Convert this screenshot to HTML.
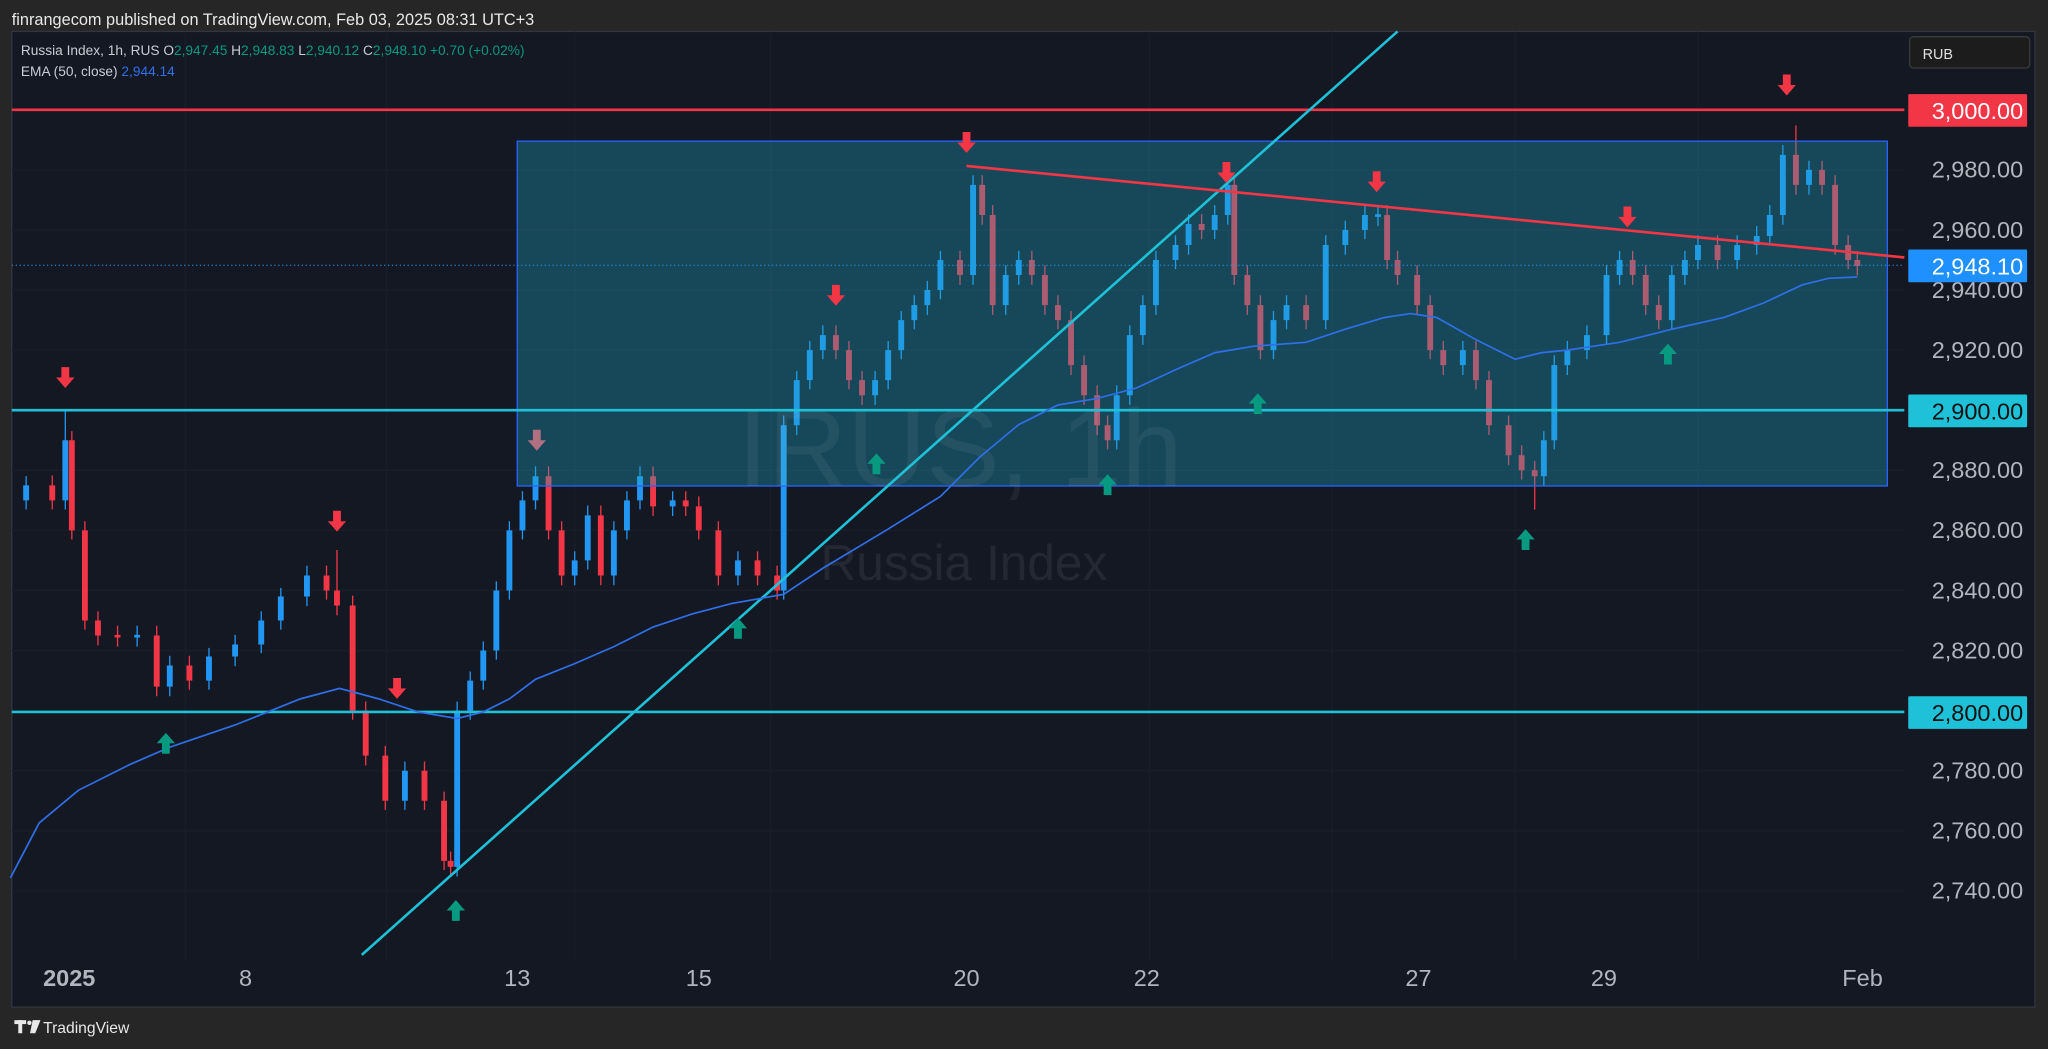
<!DOCTYPE html>
<html><head><meta charset="utf-8"><style>
html,body{margin:0;padding:0;background:#262626;overflow:hidden}
svg{display:block}
text{font-family:"Liberation Sans",sans-serif}
</style></head><body>
<svg width="2048" height="1049" viewBox="0 0 1568 803" xmlns="http://www.w3.org/2000/svg">
<rect width="1568" height="803" fill="#262626"/>
<text x="9" y="19" fill="#e8e8e8" font-size="12.5">finrangecom published on TradingView.com, Feb 03, 2025 08:31 UTC+3</text>
<rect x="9" y="24" width="1549" height="747" fill="#141823" stroke="#33363f" stroke-width="1"/>
<g stroke="#1a1e2a" stroke-width="1">
<line x1="9" x2="1458" y1="130" y2="130"/><line x1="9" x2="1458" y1="176" y2="176"/><line x1="9" x2="1458" y1="222" y2="222"/><line x1="9" x2="1458" y1="268" y2="268"/><line x1="9" x2="1458" y1="360" y2="360"/><line x1="9" x2="1458" y1="406" y2="406"/><line x1="9" x2="1458" y1="452" y2="452"/><line x1="9" x2="1458" y1="498" y2="498"/><line x1="9" x2="1458" y1="590" y2="590"/><line x1="9" x2="1458" y1="636" y2="636"/><line x1="9" x2="1458" y1="682" y2="682"/>
<line x1="142" x2="142" y1="24" y2="735"/><line x1="296" x2="296" y1="24" y2="735"/><line x1="440" x2="440" y1="24" y2="735"/><line x1="590" x2="590" y1="24" y2="735"/><line x1="880" x2="880" y1="24" y2="735"/><line x1="1020" x2="1020" y1="24" y2="735"/><line x1="1160" x2="1160" y1="24" y2="735"/><line x1="1300" x2="1300" y1="24" y2="735"/>
</g>
<path fill="none" stroke="#2196f3" stroke-width="1" d="M20 364.5V390 M50 314V390 M105 479V495 M130 502V533 M160 496V528 M180 486V510 M200 468V500 M215 450V482 M235 433V464 M310 583V620 M350 537V671 M360 514V551 M370 491V528 M380 445V505 M390 399V459 M400 376V413 M410 357V390 M440 422V448 M450 387V436 M470 399V448 M480 376V413 M490 357V390 M515 376V395 M565 422V448 M600 318V459 M610 284V333 M620 261V298 M630 249V275 M670 284V310 M680 261V298 M690 238V275 M700 226V252 M710 215V241 M720 192V229 M745 134V218 M770 203V241 M780 192V218 M855 295V344 M865 249V310 M875 226V264 M885 192V241 M900 180V206 M910 164V195 M930 157V183 M940 134V172 M975 238V275 M985 226V252 M1015 180V252 M1030 169V195 M1045 157V183 M1055 157V173 M1120 261V287 M1182 330V372 M1190 272V344 M1200 261V287 M1215 249V275 M1230 203V264 M1240 192V218 M1280 203V252 M1290 192V218 M1300 180V206 M1330 180V206 M1345 173V195 M1355 157V188 M1365 111V172 M1385 123V149"/>
<path fill="none" stroke="#2196f3" stroke-width="4.5" d="M20 383V371.5 M50 383V337 M105 486V488 M130 525.6V509.5 M160 521V502.6 M180 502.6V493.4 M200 493.4V475 M215 475V456.6 M235 456.6V440.5 M310 613V590 M350 663.6V544 M360 544V521 M370 521V498 M380 498V452 M390 452V406 M400 406V383 M410 383V364.6 M440 440.5V429 M450 429V394.5 M470 440.5V406 M480 406V383 M490 383V364.6 M515 387.6V383 M565 440.5V429 M600 452V325.5 M610 325.5V291 M620 291V268 M630 268V256.5 M670 302.5V291 M680 291V268 M690 268V245 M700 245V233.5 M710 233.5V222 M720 222V199 M745 210.5V141.5 M770 233.5V210.5 M780 210.5V199 M855 337V302.5 M865 302.5V256.5 M875 256.5V233.5 M885 233.5V199 M900 199V187.5 M910 187.5V171.4 M930 176V164.5 M940 164.5V141.5 M975 268V245 M985 245V233.5 M1015 245V187.5 M1030 187.5V176 M1045 176V164.5 M1055 164V166 M1120 279.5V268 M1182 364.6V337 M1190 337V279.5 M1200 279.5V268 M1215 268V256.5 M1230 256.5V210.5 M1240 210.5V199 M1280 245V210.5 M1290 210.5V199 M1300 199V187.5 M1330 199V187.5 M1345 187.5V180.6 M1355 180.6V164.5 M1365 164.5V118.5 M1385 141.5V130"/>
<path fill="none" stroke="#f23645" stroke-width="1" d="M40 364V390 M55 330V413 M65 399V482 M75 468V494 M90 479V495 M120 479V533 M145 502V528 M250 433V459 M258 421V471 M270 456V551 M280 537V586 M295 571V620 M325 583V620 M340 606V666 M345 652V671 M420 357V413 M430 399V448 M460 387V448 M500 357V395 M525 376V395 M535 380V413 M550 399V448 M580 422V448 M595 433V459 M640 249V275 M650 261V298 M660 284V310 M735 192V218 M752 134V172 M760 157V241 M790 192V218 M800 203V241 M810 226V252 M820 238V287 M830 272V310 M840 295V333 M848 318V344 M920 164V183 M945 134V218 M955 203V241 M965 226V275 M1000 226V252 M1062 157V206 M1070 192V218 M1085 203V241 M1095 226V275 M1105 261V287 M1130 261V298 M1140 284V333 M1155 318V356 M1165 341V367 M1175 353V390 M1250 192V218 M1260 203V241 M1270 226V252 M1315 180V206 M1375 96V149 M1395 123V149 M1405 134V195 M1415 180V206 M1422 192V211"/>
<path fill="none" stroke="#f23645" stroke-width="4.5" d="M40 371.5V383 M55 337V406 M65 406V475 M75 475V486.5 M90 486V488 M120 486.5V525.6 M145 509.5V521 M250 440.5V452 M258 452V463.5 M270 463.5V544 M280 544V578.5 M295 578.5V613 M325 590V613 M340 613V659 M345 659V663.6 M420 364.6V406 M430 406V440.5 M460 394.5V440.5 M500 364.6V387.6 M525 383V387.6 M535 387.6V406 M550 406V440.5 M580 429V440.5 M595 440.5V452 M640 256.5V268 M650 268V291 M660 291V302.5 M735 199V210.5 M752 141.5V164.5 M760 164.5V233.5 M790 199V210.5 M800 210.5V233.5 M810 233.5V245 M820 245V279.5 M830 279.5V302.5 M840 302.5V325.5 M848 325.5V337 M920 171.4V176 M945 141.5V210.5 M955 210.5V233.5 M965 233.5V268 M1000 233.5V245 M1062 164.5V199 M1070 199V210.5 M1085 210.5V233.5 M1095 233.5V268 M1105 268V279.5 M1130 268V291 M1140 291V325.5 M1155 325.5V348.5 M1165 348.5V360 M1175 360V364.6 M1250 199V210.5 M1260 210.5V233.5 M1270 233.5V245 M1315 187.5V199 M1375 118.5V141.5 M1395 130V141.5 M1405 141.5V187.5 M1415 187.5V199 M1422 199V203.6"/>
<rect x="396" y="108" width="1049" height="264" fill="rgba(30,170,200,0.33)" stroke="#2962ff" stroke-width="1"/>
<text x="735" y="372" fill="rgba(255,255,255,0.06)" font-size="84" text-anchor="middle">IRUS, 1h</text>
<text x="738" y="444" fill="rgba(255,255,255,0.07)" font-size="38" text-anchor="middle">Russia Index</text>
<line x1="9" y1="84" x2="1458" y2="84" stroke="#f23645" stroke-width="2"/>
<line x1="9" y1="314" x2="1458" y2="314" stroke="#1fc1d8" stroke-width="2"/>
<line x1="9" y1="545" x2="1458" y2="545" stroke="#1fc1d8" stroke-width="2"/>
<line x1="277" y1="731" x2="1070" y2="24" stroke="#1fc1d8" stroke-width="2"/>
<line x1="740" y1="127" x2="1458" y2="197" stroke="#f23645" stroke-width="2"/>
<polyline fill="none" stroke="#2f6fe8" stroke-width="1.3" points="8,672 30,630 60,605 100,585 130,572 180,555 230,535 260,527 290,535 320,545 350,550 370,545 390,535 410,520 440,508 470,495 500,480 530,470 560,462 600,455 630,435 680,405 720,380 750,350 780,325 810,310 840,305 870,297 900,283 930,270 960,265 1000,262 1030,252 1060,243 1080,240 1100,243 1130,260 1160,275 1180,270 1200,268 1240,262 1280,252 1320,243 1350,232 1380,218 1400,213 1422,212"/>
<g fill="#f23645">
<path d="M47 281h6v8h4l-7 8l-7-8h4z"/><path d="M255 391h6v8h4l-7 8l-7-8h4z"/><path d="M301 519h6v8h4l-7 8l-7-8h4z"/><path d="M637 218h6v8h4l-7 8l-7-8h4z"/><path d="M737 101h6v8h4l-7 8l-7-8h4z"/><path d="M936 124h6v8h4l-7 8l-7-8h4z"/><path d="M1051 131h6v8h4l-7 8l-7-8h4z"/><path d="M1243 158h6v8h4l-7 8l-7-8h4z"/><path d="M1365 57h6v8h4l-7 8l-7-8h4z"/>
</g>
<path d="M408 329h6v8h4l-7 8l-7-8h4z" fill="#b07080"/>
<g fill="#089981">
<path d="M124 577h6v-8h4l-7-8l-7 8h4z"/><path d="M346 705h6v-8h4l-7-8l-7 8h4z"/><path d="M562 489h6v-8h4l-7-8l-7 8h4z"/><path d="M668 363h6v-8h4l-7-8l-7 8h4z"/><path d="M845 379h6v-8h4l-7-8l-7 8h4z"/><path d="M960 317h6v-8h4l-7-8l-7 8h4z"/><path d="M1165 421h6v-8h4l-7-8l-7 8h4z"/><path d="M1274 279h6v-8h4l-7-8l-7 8h4z"/>
</g>
<line x1="9" y1="203" x2="1458" y2="203" stroke="#2196f3" stroke-width="0.7" stroke-dasharray="1 2"/>
<text x="16" y="42" fill="#c9ccd4" font-size="10.5">Russia Index, 1h, RUS  O<tspan fill="#089981">2,947.45</tspan>  H<tspan fill="#089981">2,948.83</tspan>  L<tspan fill="#089981">2,940.12</tspan>  C<tspan fill="#089981">2,948.10</tspan>  <tspan fill="#089981">+0.70 (+0.02%)</tspan></text>
<text x="16" y="58" fill="#c9ccd4" font-size="10.5">EMA (50, close)  <tspan fill="#2f6fe8">2,944.14</tspan></text>
<g font-size="18" fill="#b2b5be" text-anchor="end">
<text x="1549" y="136">2,980.00</text><text x="1549" y="182">2,960.00</text><text x="1549" y="228">2,940.00</text><text x="1549" y="274">2,920.00</text><text x="1549" y="366">2,880.00</text><text x="1549" y="412">2,860.00</text><text x="1549" y="458">2,840.00</text><text x="1549" y="504">2,820.00</text><text x="1549" y="596">2,780.00</text><text x="1549" y="642">2,760.00</text><text x="1549" y="688">2,740.00</text>
</g>
<rect x="1462" y="28" width="92" height="24" rx="3" fill="#1c1c1c" stroke="#3a3a3a"/>
<text x="1472" y="45" fill="#e0e0e0" font-size="11">RUB</text>
<rect x="1461" y="72" width="91" height="25" rx="1" fill="#f23645"/>
<text x="1549" y="91" fill="#fff" font-size="18" text-anchor="end">3,000.00</text>
<rect x="1461" y="191" width="91" height="25" rx="1" fill="#1e90ff"/>
<text x="1549" y="210" fill="#fff" font-size="18" text-anchor="end">2,948.10</text>
<rect x="1461" y="302" width="91" height="25" rx="1" fill="#1fc1d8"/>
<text x="1549" y="321" fill="#111" font-size="18" text-anchor="end">2,900.00</text>
<rect x="1461" y="533" width="91" height="25" rx="1" fill="#1fc1d8"/>
<text x="1549" y="552" fill="#111" font-size="18" text-anchor="end">2,800.00</text>
<g font-size="18" fill="#b2b5be" text-anchor="middle">
<text x="53" y="755" font-weight="bold">2025</text><text x="188" y="755">8</text><text x="396" y="755">13</text><text x="535" y="755">15</text><text x="740" y="755">20</text><text x="878" y="755">22</text><text x="1086" y="755">27</text><text x="1228" y="755">29</text><text x="1426" y="755">Feb</text>
</g>
<g fill="#e8e8e8"><rect x="11" y="781" width="9" height="3"/><rect x="14" y="781" width="3" height="10"/><circle cx="22.5" cy="783" r="1.7"/><path d="M25 781h6l-4 10h-4z"/></g>
<text x="33" y="791" fill="#e8e8e8" font-size="12">TradingView</text>
</svg>
</body></html>
